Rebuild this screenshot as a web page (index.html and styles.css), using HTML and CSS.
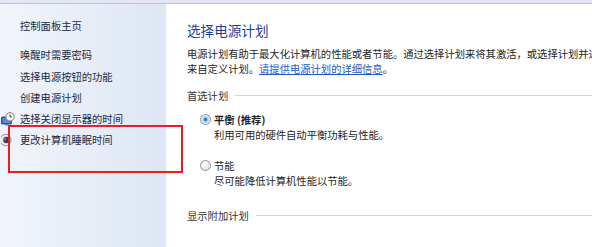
FILE: index.html
```html
<!DOCTYPE html>
<html lang="zh-CN">
<head>
<meta charset="utf-8">
<link rel="stylesheet" href="styles.css">
</head>
<body>
<div class="page">
  <div class="topbar"></div>
  <div class="layout">
    <aside class="sidebar">
      <div class="item home"><span class="slot"></span>控制面板主页</div>
      <div class="item"><span class="slot"></span>唤醒时需要密码</div>
      <div class="item"><span class="slot"></span>选择电源按钮的功能</div>
      <div class="item"><span class="slot"></span>创建电源计划</div>
      <div class="item"><span class="slot">
        <svg width="14" height="14" viewBox="0 0 14 14">
          <rect x="0.5" y="5" width="10" height="7" rx="0.5" fill="#2f63b8" stroke="#1d3f7c" stroke-width="0.8"/>
          <rect x="1.6" y="6" width="7.8" height="5" fill="#5a8ad6"/>
          <rect x="4" y="12" width="3" height="1.5" fill="#6a7b97"/>
          <circle cx="9" cy="4.8" r="4.2" fill="#f4f4f4" stroke="#7a7f88" stroke-width="1"/>
          <path d="M9 2.4 V4.9 H10.9" fill="none" stroke="#333" stroke-width="0.9"/>
        </svg></span>选择关闭显示器的时间</div>
      <div class="item"><span class="slot">
        <svg width="14" height="14" viewBox="0 0 14 14">
          <circle cx="4.5" cy="7" r="5.6" fill="#e9ebee" stroke="#8a9099" stroke-width="1"/>
          <circle cx="5.5" cy="7" r="3.3" fill="#3c4350"/>
          <circle cx="4.2" cy="6" r="1.2" fill="#7c8594"/>
        </svg></span>更改计算机睡眠时间</div>
    </aside>
    <main class="main">
      <h1 class="title">选择电源计划</h1>
      <p class="desc">电源计划有助于最大化计算机的性能或者节能。通过选择计划来将其激活，或选择计划并通过修改其电源设置<br>来自定义计划。<a class="link" href="#">请提供电源计划的详细信息</a>。</p>
      <div class="group">
        <span class="group-label">首选计划</span><span class="rule"></span>
      </div>
      <div class="option">
        <div class="opt-head"><span class="radio checked"></span><span class="opt-name bold">平衡 (推荐)</span></div>
        <div class="opt-desc">利用可用的硬件自动平衡功耗与性能。</div>
      </div>
      <div class="option second">
        <div class="opt-head"><span class="radio"></span><span class="opt-name">节能</span></div>
        <div class="opt-desc">尽可能降低计算机性能以节能。</div>
      </div>
      <div class="group more">
        <span class="group-label">显示附加计划</span><span class="rule"></span>
      </div>
    </main>
  </div>
  <div class="highlight"></div>
</div>
</body>
</html>
```

FILE: styles.css
```css
html, body {
  margin: 0;
  padding: 0;
  width: 592px;
  height: 247px;
  overflow: hidden;
  background: #ffffff;
}

.page {
  position: relative;
  width: 592px;
  height: 247px;
  font-family: "Noto Sans CJK SC", "Microsoft YaHei", sans-serif;
  font-size: 10.3px;
  color: #222;
}

.topbar {
  height: 3px;
  background: #e4e6f3;
  border-bottom: 1px solid #bcc2d8;
  box-shadow: 0 1px 0 #e6e9f3;
}

.layout {
  display: flex;
  height: 243px;
}

.sidebar {
  width: 166px;
  flex: none;
  padding-top: 11px;
  box-sizing: border-box;
  background: linear-gradient(to right, #f1f5fb 0%, #e6edf7 55%, #dde6f3 100%);
}

.item {
  display: flex;
  align-items: center;
  height: 21.25px;
  line-height: 21px;
  color: #1c2840;
  white-space: nowrap;
}

.item.home {
  margin-bottom: 8px;
}

.slot {
  width: 20px;
  flex: none;
  display: flex;
  align-items: center;
  padding-left: 1px;
  box-sizing: border-box;
}

.slot svg {
  display: block;
}

.main {
  flex: 1;
  min-width: 0;
  overflow: hidden;
  padding: 17px 0 0 21px;
  box-sizing: border-box;
  background: #ffffff;
}

.title {
  margin: 0;
  font-size: 13.6px;
  font-weight: normal;
  line-height: 19px;
  color: #1f3c9b;
}

.desc {
  margin: 6px 0 0;
  line-height: 15px;
  white-space: nowrap;
  color: #1e1e1e;
}

.link {
  color: #1a5cc8;
  text-decoration: underline;
}

.group {
  display: flex;
  align-items: center;
  margin-top: 12px;
  height: 15px;
}

.group-label {
  color: #333;
  white-space: nowrap;
}

.rule {
  flex: 1;
  height: 1px;
  background: #d2d4d8;
  margin-left: 7px;
}

.option {
  margin-top: 8px;
  padding-left: 13px;
}

.option.second {
  margin-top: 14px;
}

.opt-head {
  display: flex;
  align-items: center;
  height: 16px;
}

.opt-name {
  margin-left: 3px;
  color: #1e1e1e;
}

.bold {
  font-weight: bold;
}

.radio {
  width: 11px;
  height: 11px;
  flex: none;
  border-radius: 50%;
  border: 1px solid #8e949c;
  box-sizing: border-box;
  background: radial-gradient(circle at 40% 35%, #ffffff 0%, #e5e7ea 60%, #cfd2d6 100%);
}

.radio.checked {
  background: radial-gradient(circle at 50% 50%, #1a6fc4 0%, #3d8fd8 28%, #9fc6ea 32%, #e9ecef 60%, #cfd2d6 100%);
}

.opt-desc {
  line-height: 16px;
  padding-left: 14px;
  color: #1e1e1e;
}

.group.more {
  margin-top: 19px;
}

.highlight {
  position: absolute;
  left: 8px;
  top: 125px;
  width: 175px;
  height: 48px;
  border: 2px solid #ec1c24;
  box-sizing: border-box;
}
```
